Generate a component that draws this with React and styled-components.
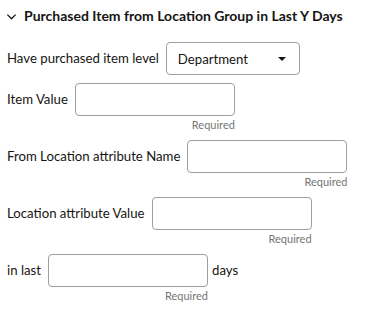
import React from "react";
import styled, { createGlobalStyle } from "styled-components";

const GlobalStyle = createGlobalStyle`
	body {
		margin: 0;
		background: #ffffff;
		font-family: Lato, "Noto Sans", sans-serif;
		color: #161513;
	}
`;

const Panel = styled.div`
	padding: 7px 0 0 7px;
	width: 369px;
	box-sizing: border-box;
`;

const Header = styled.div`
	display: flex;
	align-items: center;
	gap: 7px;
	height: 18px;
	margin-bottom: 17px;
`;

const Chevron = styled.svg`
	width: 11px;
	height: 11px;
	flex: none;
	margin-left: -1px;
`;

const Title = styled.h2`
	margin: 0;
	font-size: 14px;
	font-weight: 700;
	line-height: 18px;
`;

const Rows = styled.div`
	display: flex;
	flex-direction: column;
	gap: 8px;
`;

const Row = styled.div`
	display: flex;
	align-items: flex-start;
	gap: 7px;
`;

const Label = styled.label`
	font-size: 13.2px;
	line-height: 33px;
	white-space: nowrap;
`;

const Field = styled.div`
	display: flex;
	flex-direction: column;
	align-items: flex-end;
`;

const Input = styled.input`
	box-sizing: border-box;
	width: 160px;
	height: 33px;
	border: 1px solid #9e9e9e;
	border-radius: 4px;
	background: #ffffff;
	font: inherit;
	padding: 0 10px;
	outline: none;
`;

const Select = styled.div`
	box-sizing: border-box;
	width: 134px;
	height: 33px;
	border: 1px solid #9e9e9e;
	border-radius: 4px;
	display: flex;
	align-items: center;
	justify-content: space-between;
	padding: 0 13px 0 11px;
	font-size: 13.2px;
`;

const Caret = styled.span`
	width: 0;
	height: 0;
	border-left: 4px solid transparent;
	border-right: 4px solid transparent;
	border-top: 4px solid #161513;
`;

const Hint = styled.div`
	margin-top: 2px;
	font-size: 11px;
	line-height: 14px;
	color: #757575;
`;

const Suffix = styled.span`
	font-size: 13.2px;
	line-height: 33px;
	margin-left: -3px;
`;

const fields = [
	{ label: "Item Value" },
	{ label: "From Location attribute Name" },
	{ label: "Location attribute Value" },
	{ label: "in last", suffix: "days" },
];

export default function App() {
	return (
		<Panel>
			<GlobalStyle />
			<Header>
				<Chevron viewBox="0 0 12 12">
					<polyline
						points="1.5,4 6,8.5 10.5,4"
						fill="none"
						stroke="#161513"
						strokeWidth="1.4"
					/>
				</Chevron>
				<Title>Purchased Item from Location Group in Last Y Days</Title>
			</Header>
			<Rows>
				<Row>
					<Label>Have purchased item level</Label>
					<Select>
						<span>Department</span>
						<Caret />
					</Select>
				</Row>
				{fields.map(({ label, suffix }) => (
					<Row key={label}>
						<Label>{label}</Label>
						<Field>
							<Input />
							<Hint>Required</Hint>
						</Field>
						{suffix && <Suffix>{suffix}</Suffix>}
					</Row>
				))}
			</Rows>
		</Panel>
	);
}
